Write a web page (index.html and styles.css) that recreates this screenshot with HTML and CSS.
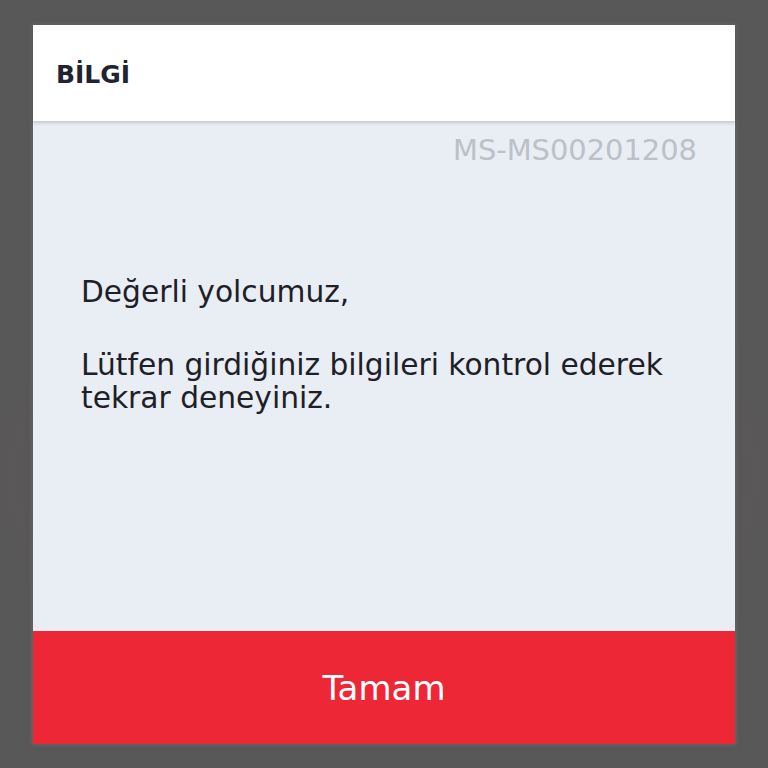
FILE: index.html
```html
<!DOCTYPE html>
<html lang="tr">
<head>
<meta charset="utf-8">
<link rel="stylesheet" href="styles.css">
</head>
<body>
<div class="overlay">
  <div class="modal">
    <div class="modal-header">
      <h1 class="modal-title">BİLGİ</h1>
    </div>
    <div class="modal-body">
      <div class="code">MS-MS00201208</div>
      <div class="message">
        <p>Değerli yolcumuz,</p>
        <p>Lütfen girdiğiniz bilgileri kontrol ederek tekrar deneyiniz.</p>
      </div>
    </div>
    <div class="modal-button">Tamam</div>
  </div>
</div>
</body>
</html>
```
FILE: styles.css
```css
html, body {
  margin: 0;
  padding: 0;
  height: 100%;
}
body {
  background-color: #585858;
  background-image: radial-gradient(ellipse 420px 260px at 50% 62%, rgba(120, 70, 70, 0.35), rgba(88, 88, 88, 0) 100%);
  font-family: "DejaVu Sans", Verdana, sans-serif;
}
.overlay {
  height: 768px;
  box-sizing: border-box;
  padding: 25px 33px 24px 33px;
  display: flex;
}
.modal {
  flex: 1;
  display: flex;
  flex-direction: column;
  background: #e9edf4;
  box-shadow: 0 0 4px 1px rgba(120, 120, 120, 0.5);
}
.modal-header {
  height: 96px;
  box-sizing: border-box;
  background: #ffffff;
  padding: 35px 0 0 23px;
  box-shadow: 0 2px 3px rgba(0, 0, 0, 0.16);
  position: relative;
  z-index: 1;
}
.modal-title {
  margin: 0;
  font-size: 25px;
  line-height: 30px;
  font-weight: 700;
  color: #1f2430;
}
.modal-body {
  flex: 1;
  display: flex;
  flex-direction: column;
  padding: 12px 38px 0 48px;
}
.code {
  align-self: flex-end;
  font-size: 28.9px;
  line-height: 34px;
  color: #bcc0c8;
}
.message {
  margin-top: 108px;
  font-size: 29.7px;
  line-height: 33px;
  color: #1d2027;
}
.message p {
  margin: 0 0 40px 0;
}
.modal-button {
  height: 113px;
  box-sizing: border-box;
  padding-top: 37px;
  background: #ee2737;
  color: #ffffff;
  font-size: 34px;
  line-height: 40px;
  text-align: center;
}
```
